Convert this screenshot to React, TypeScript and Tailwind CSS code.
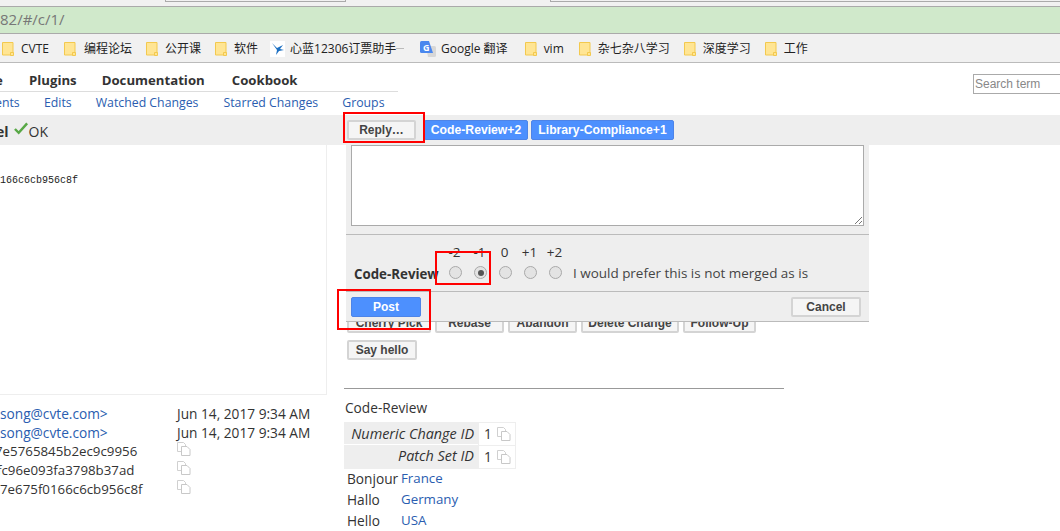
const sans = 'font-["Open_Sans","Noto_Sans_CJK_SC",sans-serif]';

function Folder() {
  return (
    <svg width="12" height="14" viewBox="0 0 12 14" className="shrink-0">
      <path d="M.5.5h10.500v12.500H.5z" fill="#ffe594" stroke="#f3c94e" />
      <path d="M8.500 10.500h3v3h-3z" fill="#ffe594" stroke="#f3c94e" />
    </svg>
  );
}

function Bookmark({ label, className }: { label: string; className: string }) {
  return (
    <div className="flex items-center">
      <Folder />
      <span className={className}>{label}</span>
    </div>
  );
}

function CopyIcon() {
  return (
    <svg width="14" height="14" viewBox="0 0 14 14" className="shrink-0">
      <path d="M.5.5h6l2 2v7h-8z" fill="#fff" stroke="#d0d0d0" />
      <path d="M4.500 4.500h5.500l3 3v6h-8.500z" fill="#fff" stroke="#c8c8c8" />
    </svg>
  );
}

function Chip({ children, className }: { children: string; className: string }) {
  return (
    <span
      className={`flex h-[20px] items-center justify-center rounded-[2px] border border-[#4d84e8] bg-[#4d90fe] font-['Liberation_Sans',sans-serif] text-[12.2px] font-bold text-white ${className}`}
    >
      {children}
    </span>
  );
}

function GreyButton({ children, className = '' }: { children: string; className?: string }) {
  return (
    <span
      className={`flex h-[20px] items-center justify-center whitespace-nowrap rounded-[2px] border-2 border-[#d4d4d4] bg-[#f5f5f5] font-['Liberation_Sans',sans-serif] text-[12px] font-bold text-[#444] ${className}`}
    >
      {children}
    </span>
  );
}

function Radio({ checked = false }: { checked?: boolean }) {
  return (
    <span className="flex h-[13px] w-[13px] items-center justify-center rounded-full border border-[#a9a9a9] bg-[#e3e3e3]">
      {checked && <span className="h-[6px] w-[6px] rounded-full bg-[#555]" />}
    </span>
  );
}

const scores = ['-2', '-1', '0', '+1', '+2'];

export default function App() {
  return (
    <div className={`relative h-[531px] w-[1060px] overflow-hidden bg-white ${sans} text-[13.7px] text-[#333]`}>
      {/* Browser chrome */}
      <div className="flex h-[7px] items-start border-b border-[#aaa] bg-[#f1f1f1]">
        <div className="ml-[165px] h-[2px] w-[181px] border-x border-b border-[#aaa]" />
        <div className="ml-[204px] h-[2px] flex-1 border-b border-l border-[#aaa]" />
      </div>
      <div className="flex h-[27px] items-center border-b border-[#aaa] bg-[#d0e9cb] pb-[1px] text-[15px] text-[#777]">
        82/#/c/1/
      </div>
      <div className="flex h-[29px] items-center border-b border-[#bbb] bg-[#f1f1f1] pl-[2px] pt-[1px] text-[12px] text-[#222]">
        <Bookmark label="CVTE" className="ml-[7px] mr-[14px] w-[29px]" />
        <Bookmark label="编程论坛" className="ml-[8px] mr-[14px]" />
        <Bookmark label="公开课" className="ml-[7px] mr-[14px]" />
        <Bookmark label="软件" className="ml-[7px] mr-[12px]" />
        <div className="flex h-[16px] w-[15px] items-center justify-center bg-white">
          <svg width="15" height="14" viewBox="0 0 15 14">
            <path d="M2 1l5 5 6-3-3 4 4 1-5 1-3 4 1-5z" fill="#1b6fc2" />
          </svg>
        </div>
        <span className="ml-[5px] flex w-[117px] items-center">
          心蓝12306订票助手<span className="h-px w-[8px] bg-[#bbb]" />
        </span>
        <svg width="16" height="16" viewBox="0 0 16 16" className="ml-[13px] shrink-0">
          <path d="M6 5h8.500Q16 5 16 6.500v8q0 1.500-1.500 1.500H8z" fill="#d7d7d7" />
          <path d="M0 1.500Q0 0 1.500 0H9l4 12H1.500Q0 12 0 10.500z" fill="#4a87ee" />
          <text x="3" y="9.500" fontSize="9" fontWeight="700" fill="#fff">G</text>
        </svg>
        <span className="ml-[5px] mr-[17px]">Google 翻译</span>
        <Bookmark label="vim" className="ml-[7px] mr-[15px]" />
        <Bookmark label="杂七杂八学习" className="ml-[7px] mr-[14px]" />
        <Bookmark label="深度学习" className="ml-[7px] mr-[14px]" />
        <Bookmark label="工作" className="ml-[7px]" />
      </div>

      {/* Gerrit header */}
      <div className="h-[29px] w-[398px] border-b border-[#ddd]">
        <div className="flex h-[28px] items-center pt-[7px] text-[13.2px] font-bold text-[#333]">
          <span className="ml-[-5px] w-[34px]">e</span>
          <span className="mr-[25px]">Plugins</span>
          <span className="mr-[27px]">Documentation</span>
          <span>Cookbook</span>
        </div>
      </div>
      <div className="absolute right-[-3px] top-[74px] h-[20px] w-[90px] border border-[#aaa] pl-[1px] font-['Liberation_Sans',sans-serif] text-[12px] leading-[18px] text-[#888]">
        Search term
      </div>
      <div className="flex h-[23px] items-center text-[12.3px] text-[#2a5db0]">
        <span className="ml-[-5px] w-[49px]">ents</span>
        <span className="mr-[24px]">Edits</span>
        <span className="mr-[25px]">Watched Changes</span>
        <span className="mr-[24px]">Starred Changes</span>
        <span>Groups</span>
      </div>

      {/* Status bar */}
      <div className="flex h-[30px] items-center bg-[#eee]">
        <span className="ml-[-4px] pt-[2px] text-[14px] font-bold">el</span>
        <svg width="15" height="14" viewBox="0 0 16 14" className="ml-[5px] mt-[-3px]">
          <path d="M1 7l4 4 9-10" fill="none" stroke="#58a846" strokeWidth="2.600" />
        </svg>
        <span className="pt-[2px] text-[14px]">OK</span>
        <div className="ml-[299px] flex items-center">
          <GreyButton className="mr-[8px] w-[69px]">Reply…</GreyButton>
          <Chip className="mr-[3px] w-[104px]">Code-Review+2</Chip>
          <Chip className="w-[143px]">Library-Compliance+1</Chip>
        </div>
      </div>

      {/* Body columns */}
      <div className="flex">
        <div className="w-[344px] shrink-0">
          <div className="h-[250px] w-[327px] border-b border-r border-[#eee] pt-[29px] font-['Liberation_Mono',monospace] text-[10px] leading-[14px] text-[#222]">
            166c6cb956c8f
          </div>
          <div className="mt-[9px] grid w-[327px] grid-cols-[177px_1fr] leading-[19px]">
            <a className="text-[#2a5db0]">song@cvte.com&gt;</a>
            <span>Jun 14, 2017 9:34 AM</span>
            <a className="text-[#2a5db0]">song@cvte.com&gt;</a>
            <span>Jun 14, 2017 9:34 AM</span>
            <span className="ml-[-5px] text-[13.3px]">7e5765845b2ec9c9956</span>
            <CopyIcon />
            <span className="ml-[-3px] text-[13.3px]">fc96e093fa3798b37ad</span>
            <CopyIcon />
            <span className="text-[13.3px]">7e675f0166c6cb956c8f</span>
            <CopyIcon />
          </div>
        </div>
        <div className="w-[440px] shrink-0">
          <div className="ml-[3px] mt-[168px] flex gap-[4px]">
            <GreyButton className="w-[84px]">Cherry Pick</GreyButton>
            <GreyButton className="w-[69px]">Rebase</GreyButton>
            <GreyButton className="w-[69px]">Abandon</GreyButton>
            <GreyButton className="w-[98px]">Delete Change</GreyButton>
            <GreyButton className="w-[73px]">Follow-Up</GreyButton>
          </div>
          <GreyButton className="ml-[3px] mt-[7px] w-[70px]">Say hello</GreyButton>
          <div className="mt-[28px] h-px w-[440px] bg-[#999]" />
          <div className="ml-[1px] mt-[10px] leading-[18px]">Code-Review</div>
          <div className="mt-[5px] grid w-[172px] grid-cols-[134px_38px] leading-[22px]">
            <span className="h-[22px] bg-[#eee] pr-[4px] pt-[1px] text-right text-[14.4px] italic leading-[21px]">Numeric Change ID</span>
            <span className="flex items-center gap-[5px] border border-b-0 border-[#eee] pl-[5px]">1 <CopyIcon /></span>
            <span className="bg-[#eee] pr-[4px] text-right text-[14.4px] italic">Patch Set ID</span>
            <span className="flex items-center gap-[5px] border border-[#eee] pl-[5px]">1 <CopyIcon /></span>
          </div>
          <div className="ml-[3px] mt-[-1px] grid grid-cols-[54px_1fr] leading-[21px]">
            <span>Bonjour</span>
            <a className="text-[13.3px] text-[#2a5db0]">France</a>
            <span>Hallo</span>
            <a className="text-[13.3px] text-[#2a5db0]">Germany</a>
            <span>Hello</span>
            <a className="text-[13.3px] text-[#2a5db0]">USA</a>
          </div>
        </div>
      </div>

      {/* Reply popup */}
      <div className="absolute left-[346px] top-[145px] w-[523px] bg-[#eee]">
        <div className="relative ml-[5px] h-[81px] w-[513px] border border-[#aaa] bg-white">
          <svg width="9" height="9" viewBox="0 0 9 9" className="absolute bottom-0 right-0">
            <path d="M1 8l7-7M5 8l3-3" stroke="#777" fill="none" />
          </svg>
        </div>
        <div className="mt-[8px] h-[57px] border-t border-[#bbb] pt-[7px]">
          <div className="ml-[96px] flex h-[20px] text-[13.500px] leading-[20px] text-[#333]">
            {scores.map((v) => (
              <span key={v} className="w-[25px] text-center">{v}</span>
            ))}
          </div>
          <div className="flex h-[21px] items-center">
            <span className="ml-[8px] mt-[4px] w-[95px] text-[13.300px] font-bold">Code-Review</span>
            <div className="flex w-[125px]">
              {scores.map((v) => (
                <span key={v} className="flex w-[25px] justify-start"><Radio checked={v === '-1'} /></span>
              ))}
            </div>
            <span className="ml-[-1px] mt-[2px] text-[13.460px] text-[#444]">I would prefer this is not merged as is</span>
          </div>
        </div>
        <div className="flex h-[31px] items-center justify-between border-y border-[#bbb] pl-[5px] pr-[8px]">
          <span className="flex h-[20px] w-[70px] items-center justify-center rounded-[2px] border border-[#4d84e8] bg-[#4d90fe] font-['Liberation_Sans',sans-serif] text-[12px] font-bold text-white">Post</span>
          <GreyButton className="w-[70px]">Cancel</GreyButton>
        </div>
      </div>

      {/* Red annotation boxes */}
      <div className="absolute left-[343px] top-[112px] h-[31px] w-[82px] border-2 border-[#f00]" />
      <div className="absolute left-[435px] top-[251px] h-[34px] w-[56px] border-2 border-[#f00]" />
      <div className="absolute left-[337px] top-[289px] h-[41px] w-[94px] border-2 border-[#f00]" />
    </div>
  );
}
